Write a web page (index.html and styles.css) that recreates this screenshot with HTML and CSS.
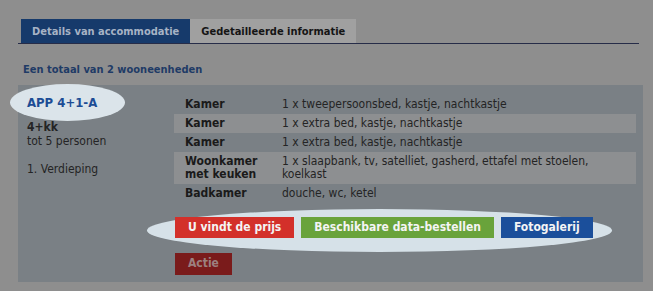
FILE: index.html
```html
<!DOCTYPE html>
<html lang="nl">
<head>
    <meta charset="UTF-8">
    <title>Details van accommodatie</title>
    <link rel="stylesheet" href="styles.css">
</head>
<body>

    <div class="tabs">
        <div class="tab active">Details van accommodatie</div>
        <div class="tab">Gedetailleerde informatie</div>
    </div>

    <div class="total">Een totaal van 2 wooneenheden</div>

    <div class="unit">
        <div class="unit-info">
            <div class="unit-name">APP 4+1-A</div>
            <div class="unit-type">4+kk</div>
            <div>tot 5 personen</div>
            <div class="unit-floor">1. Verdieping</div>
        </div>

        <div class="unit-main">
            <table class="rooms">
                <tr>
                    <th>Kamer</th>
                    <td>1 x tweepersoonsbed, kastje, nachtkastje</td>
                </tr>
                <tr>
                    <th>Kamer</th>
                    <td>1 x extra bed, kastje, nachtkastje</td>
                </tr>
                <tr>
                    <th>Kamer</th>
                    <td>1 x extra bed, kastje, nachtkastje</td>
                </tr>
                <tr>
                    <th>Woonkamer<br>met keuken</th>
                    <td>1 x slaapbank, tv, satelliet, gasherd, ettafel met stoelen,<br>koelkast</td>
                </tr>
                <tr>
                    <th>Badkamer</th>
                    <td>douche, wc, ketel</td>
                </tr>
            </table>

            <div class="actions">
                <span class="btn btn-red">U vindt de prijs</span>
                <span class="btn btn-green">Beschikbare data-bestellen</span>
                <span class="btn btn-blue">Fotogalerij</span>
            </div>
            <div class="actions-extra">
                <span class="btn btn-dark">Actie</span>
            </div>
        </div>
    </div>

</body>
</html>
```

FILE: styles.css
```css
/* Basis */
body {
    margin: 0;
    padding: 19px 0 0 0;
    background-color: #8e8e8e;
    font-family: "DejaVu Sans Condensed", "DejaVu Sans", sans-serif;
    font-size: 12px;
    color: #242424;
}

/* Tabbladen */
.tabs {
    display: flex;
    margin: 0 14px 0 18px;
    padding-left: 3px;
    border-bottom: 1px solid #262c48;
}
.tab {
    height: 24px;
    line-height: 25px;
    padding: 0 11px;
    font-size: 11px;
    font-weight: bold;
    background-color: #a0a0a0;
    color: #151515;
}
.tab.active {
    background-color: #163a6b;
    color: #a7b3c5;
}

/* Totaal */
.total {
    margin: 19px 0 0 23px;
    height: 22px;
    font-size: 11px;
    font-weight: bold;
    color: #1f3b66;
}

/* Blok van de wooneenheid */
.unit {
    display: flex;
    width: 625px;
    margin-left: 18px;
    padding: 10px 7px 7px 0;
    box-sizing: border-box;
    background-color: #7a8085;
}
.unit-info {
    width: 147px;
    padding-left: 9px;
    flex-shrink: 0;
    line-height: 14px;
}
.unit-name {
    position: relative;
    z-index: 0;
    font-size: 13px;
    font-weight: bold;
    color: #1c4c95;
    line-height: 16px;
    margin-bottom: 9px;
}
/* markering rond de naam */
.unit-name::before {
    content: "";
    position: absolute;
    left: -17px;
    top: -11px;
    width: 115px;
    height: 37px;
    border-radius: 50%;
    background-color: #dbe4ea;
    z-index: -1;
}
.unit-type {
    font-weight: bold;
}
.unit-floor {
    margin-top: 14px;
}

.unit-main {
    flex: 1;
}

/* Tabel met kamers */
.rooms {
    width: 100%;
    border-collapse: collapse;
    line-height: 13px;
}
.rooms th,
.rooms td {
    padding: 3px 0 3px 0;
    text-align: left;
    vertical-align: top;
}
.rooms th {
    width: 97px;
    padding-left: 11px;
    color: #1a1a1a;
}
.rooms tr:nth-child(even) {
    background-color: #8d8f91;
}

/* Knoppen */
.actions {
    position: relative;
    display: flex;
    gap: 7px;
    margin-top: 14px;
    padding-left: 1px;
}
.actions::before {
    content: "";
    position: absolute;
    left: -27px;
    top: -8px;
    width: 465px;
    height: 43px;
    border-radius: 50%;
    background-color: #d6e1e8;
}
.actions-extra {
    display: flex;
    margin-top: 15px;
    padding-left: 1px;
}
.btn {
    position: relative;
    height: 21px;
    line-height: 21px;
    padding: 0 13px;
    font-weight: bold;
    color: #f4f4f4;
}
.btn-red {
    background-color: #d3302a;
}
.btn-green {
    background-color: #69a33b;
}
.btn-blue {
    background-color: #1b4f9b;
}
.btn-dark {
    height: 22px;
    background-color: #7a1b1b;
    color: #9c8080;
}
```
